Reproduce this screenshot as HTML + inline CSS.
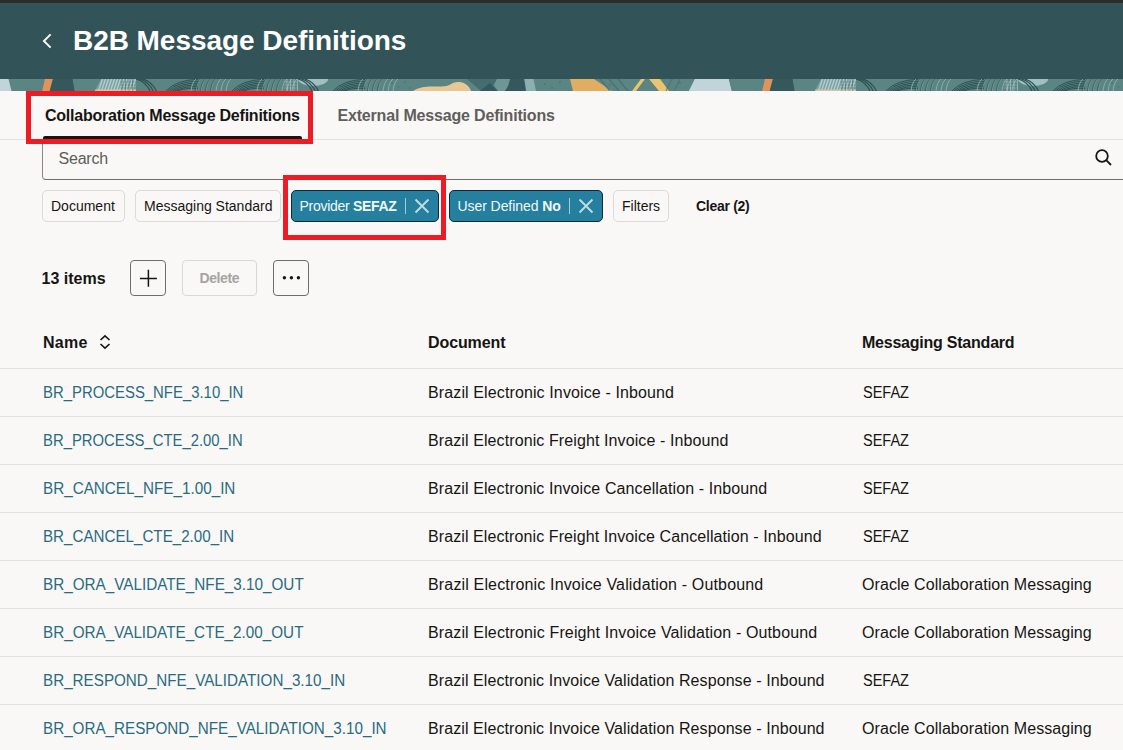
<!DOCTYPE html>
<html><head><meta charset="utf-8">
<style>
*{margin:0;padding:0;box-sizing:border-box}
html,body{width:1123px;height:750px;overflow:hidden;background:#f9f8f6;font-family:"Liberation Sans",sans-serif;color:#161513}
.a{position:absolute;white-space:nowrap}
#topbar{position:absolute;left:0;top:0;width:1123px;height:3px;background:#2f2b2b}
#hdr{position:absolute;left:0;top:3px;width:1123px;height:76px;background:#325358}
#strip{position:absolute;left:0;top:79px;width:1123px;height:12px;overflow:hidden;background:#5b8682}
.t{line-height:1}
.title{font-size:28px;font-weight:bold;color:#fff}
.tab{font-size:16px;font-weight:bold}
.line{position:absolute;left:0;width:1123px;height:1px;background:#e3e1dd}
.chip{position:absolute;top:190px;height:32px;border:1px solid #dcdad5;border-radius:5px;background:#f9f8f6}
.chip.sel{background:#257f9e;border-color:#0f2a35}
.ctext{font-size:14px}
.red{position:absolute;border:5px solid #ed1c24}
.btn{position:absolute;top:260px;height:36px;border:1px solid #6f6d6a;border-radius:4px}
.cell{font-size:16px}
.link{color:#2a6b80}
</style></head><body>
<div id="topbar"></div>
<div id="hdr"></div>
<div id="strip"><svg width="1123" height="12" viewBox="0 0 1123 12" style="position:absolute;left:0;top:0"><rect width="1123" height="12" fill="#5a8582"/><g><polygon points="-25,0 8.5,0 11.5,12 -31,12" fill="#c1d4d9" opacity="1"/>
<polygon points="695,0 728.5,0 731.5,12 689,12" fill="#c1d4d9" opacity="1"/>
<polygon points="44.9,0 52.9,0 49.7,12 42.2,12" fill="#e2935a" opacity="1"/>
<polygon points="52.9,0 72.6,0 74.6,12 49.7,12" fill="#34585c" opacity="1"/>
<polygon points="101,0 136,0 136,12 95,12" fill="#7fa3a3" opacity="1"/>
<path d="M102.5 0 L98.5 12" stroke="#b8d0d2" stroke-width="1.2" fill="none" opacity="1"/>
<path d="M105.5 0 L101.5 12" stroke="#b8d0d2" stroke-width="1.2" fill="none" opacity="1"/>
<path d="M108.5 0 L104.5 12" stroke="#b8d0d2" stroke-width="1.2" fill="none" opacity="1"/>
<path d="M111.5 0 L107.5 12" stroke="#b8d0d2" stroke-width="1.2" fill="none" opacity="1"/>
<path d="M114.5 0 L110.5 12" stroke="#b8d0d2" stroke-width="1.2" fill="none" opacity="1"/>
<path d="M117.5 0 L113.5 12" stroke="#b8d0d2" stroke-width="1.2" fill="none" opacity="1"/>
<path d="M120.5 0 L116.5 12" stroke="#b8d0d2" stroke-width="1.2" fill="none" opacity="1"/>
<path d="M123.5 0 L119.5 12" stroke="#b8d0d2" stroke-width="1.2" fill="none" opacity="1"/>
<path d="M126.5 0 L122.5 12" stroke="#b8d0d2" stroke-width="1.2" fill="none" opacity="1"/>
<path d="M129.5 0 L125.5 12" stroke="#b8d0d2" stroke-width="1.2" fill="none" opacity="1"/>
<path d="M132.5 0 L128.5 12" stroke="#b8d0d2" stroke-width="1.2" fill="none" opacity="1"/>
<path d="M135.5 0 L131.5 12" stroke="#b8d0d2" stroke-width="1.2" fill="none" opacity="1"/>
<polygon points="95,10.5 136,10.5 136,12 95,12" fill="#dccba0" opacity="0.8"/>
<path d="M122 0 V12" stroke="#2f5356" stroke-width="0.8" fill="none" opacity="0.5"/>
<path d="M125.5 0 V12" stroke="#2f5356" stroke-width="0.8" fill="none" opacity="0.5"/>
<path d="M129 0 V12" stroke="#2f5356" stroke-width="0.8" fill="none" opacity="0.5"/>
<path d="M132.5 0 V12" stroke="#2f5356" stroke-width="0.8" fill="none" opacity="0.5"/>
<path d="M120 3 H136" stroke="#2f5356" stroke-width="0.7" fill="none" opacity="0.35"/>
<path d="M120 6 H136" stroke="#2f5356" stroke-width="0.7" fill="none" opacity="0.35"/>
<path d="M120 9 H136" stroke="#2f5356" stroke-width="0.7" fill="none" opacity="0.35"/>
<path d="M136 0 Q145 2 150 12" stroke="#2a4d50" stroke-width="1.1" fill="none" opacity="1"/>
<path d="M139.2 0 Q148.2 2 153.2 12" stroke="#2a4d50" stroke-width="1.1" fill="none" opacity="1"/>
<path d="M142.4 0 Q151.4 2 156.4 12" stroke="#2a4d50" stroke-width="1.1" fill="none" opacity="1"/>
<path d="M166 12 Q176 1 198 0.3" stroke="#2a4d50" stroke-width="1" fill="none" opacity="0.95"/>
<path d="M168.2 12 Q178.6 2.4 198 2.2" stroke="#2a4d50" stroke-width="1" fill="none" opacity="0.95"/>
<path d="M170.4 12 Q181.2 3.8 198 4.1" stroke="#2a4d50" stroke-width="1" fill="none" opacity="0.95"/>
<path d="M172.6 12 Q183.8 5.2 198 6" stroke="#2a4d50" stroke-width="1" fill="none" opacity="0.95"/>
<path d="M174.8 12 Q186.4 6.6 198 7.9" stroke="#2a4d50" stroke-width="1" fill="none" opacity="0.95"/>
<path d="M177 12 Q189 8 198 9.8" stroke="#2a4d50" stroke-width="1" fill="none" opacity="0.95"/>
<path d="M196 0 Q192 3 191 12" stroke="#93b3b3" stroke-width="1" fill="none" opacity="0.85"/>
<path d="M201 0 Q197 3 196 12" stroke="#93b3b3" stroke-width="1" fill="none" opacity="0.85"/>
<path d="M206 0 Q202 3 201 12" stroke="#93b3b3" stroke-width="1" fill="none" opacity="0.85"/>
<path d="M211 0 Q207 3 206 12" stroke="#93b3b3" stroke-width="1" fill="none" opacity="0.85"/>
<path d="M216 0 Q212 3 211 12" stroke="#93b3b3" stroke-width="1" fill="none" opacity="0.85"/>
<path d="M221 0 Q217 3 216 12" stroke="#93b3b3" stroke-width="1" fill="none" opacity="0.85"/>
<path d="M226 0 Q222 3 221 12" stroke="#93b3b3" stroke-width="1" fill="none" opacity="0.85"/>
<path d="M231 0 Q227 3 226 12" stroke="#93b3b3" stroke-width="1" fill="none" opacity="0.85"/>
<path d="M200.5 0 Q196.5 3 195.5 12" stroke="#2a4d50" stroke-width="0.9" fill="none" opacity="0.8"/>
<path d="M205.5 0 Q201.5 3 200.5 12" stroke="#2a4d50" stroke-width="0.9" fill="none" opacity="0.8"/>
<path d="M210.5 0 Q206.5 3 205.5 12" stroke="#2a4d50" stroke-width="0.9" fill="none" opacity="0.8"/>
<path d="M215.5 0 Q211.5 3 210.5 12" stroke="#2a4d50" stroke-width="0.9" fill="none" opacity="0.8"/>
<path d="M232 12 Q242 1 264 0.3" stroke="#2a4d50" stroke-width="1" fill="none" opacity="0.95"/>
<path d="M234.2 12 Q244.6 2.4 264 2.2" stroke="#2a4d50" stroke-width="1" fill="none" opacity="0.95"/>
<path d="M236.4 12 Q247.2 3.8 264 4.1" stroke="#2a4d50" stroke-width="1" fill="none" opacity="0.95"/>
<path d="M238.6 12 Q249.8 5.2 264 6" stroke="#2a4d50" stroke-width="1" fill="none" opacity="0.95"/>
<path d="M240.8 12 Q252.4 6.6 264 7.9" stroke="#2a4d50" stroke-width="1" fill="none" opacity="0.95"/>
<path d="M243 12 Q255 8 264 9.8" stroke="#2a4d50" stroke-width="1" fill="none" opacity="0.95"/>
<path d="M262 0 Q258 3 257 12" stroke="#93b3b3" stroke-width="1" fill="none" opacity="0.85"/>
<path d="M267 0 Q263 3 262 12" stroke="#93b3b3" stroke-width="1" fill="none" opacity="0.85"/>
<path d="M272 0 Q268 3 267 12" stroke="#93b3b3" stroke-width="1" fill="none" opacity="0.85"/>
<path d="M277 0 Q273 3 272 12" stroke="#93b3b3" stroke-width="1" fill="none" opacity="0.85"/>
<path d="M282 0 Q278 3 277 12" stroke="#93b3b3" stroke-width="1" fill="none" opacity="0.85"/>
<path d="M287 0 Q283 3 282 12" stroke="#93b3b3" stroke-width="1" fill="none" opacity="0.85"/>
<path d="M292 0 Q288 3 287 12" stroke="#93b3b3" stroke-width="1" fill="none" opacity="0.85"/>
<path d="M297 0 Q293 3 292 12" stroke="#93b3b3" stroke-width="1" fill="none" opacity="0.85"/>
<path d="M266.5 0 Q262.5 3 261.5 12" stroke="#2a4d50" stroke-width="0.9" fill="none" opacity="0.8"/>
<path d="M271.5 0 Q267.5 3 266.5 12" stroke="#2a4d50" stroke-width="0.9" fill="none" opacity="0.8"/>
<path d="M276.5 0 Q272.5 3 271.5 12" stroke="#2a4d50" stroke-width="0.9" fill="none" opacity="0.8"/>
<path d="M281.5 0 Q277.5 3 276.5 12" stroke="#2a4d50" stroke-width="0.9" fill="none" opacity="0.8"/>
<path d="M287 0 V12" stroke="#c8dadc" stroke-width="0.8" fill="none" opacity="0.6"/>
<path d="M290.5 0 V12" stroke="#c8dadc" stroke-width="0.8" fill="none" opacity="0.6"/>
<path d="M294 0 V12" stroke="#c8dadc" stroke-width="0.8" fill="none" opacity="0.6"/>
<path d="M297.5 0 V12" stroke="#c8dadc" stroke-width="0.8" fill="none" opacity="0.6"/>
<path d="M284 3 H298" stroke="#c8dadc" stroke-width="0.7" fill="none" opacity="0.4"/>
<path d="M284 6 H298" stroke="#c8dadc" stroke-width="0.7" fill="none" opacity="0.4"/>
<path d="M284 9 H298" stroke="#c8dadc" stroke-width="0.7" fill="none" opacity="0.4"/>
<path d="M298 0 A15 7 0 0 0 328 0 Z" stroke="none" stroke-width="0" fill="#9fbfc1" opacity="1"/>
<path d="M298 0 Q307 2 312 12" stroke="#2a4d50" stroke-width="1.1" fill="none" opacity="1"/>
<path d="M301.2 0 Q310.2 2 315.2 12" stroke="#2a4d50" stroke-width="1.1" fill="none" opacity="1"/>
<path d="M304.4 0 Q313.4 2 318.4 12" stroke="#2a4d50" stroke-width="1.1" fill="none" opacity="1"/>
<path d="M333 12 Q343 1 365 0.3" stroke="#2a4d50" stroke-width="1" fill="none" opacity="0.95"/>
<path d="M335.2 12 Q345.6 2.4 365 2.2" stroke="#2a4d50" stroke-width="1" fill="none" opacity="0.95"/>
<path d="M337.4 12 Q348.2 3.8 365 4.1" stroke="#2a4d50" stroke-width="1" fill="none" opacity="0.95"/>
<path d="M339.6 12 Q350.8 5.2 365 6" stroke="#2a4d50" stroke-width="1" fill="none" opacity="0.95"/>
<path d="M341.8 12 Q353.4 6.6 365 7.9" stroke="#2a4d50" stroke-width="1" fill="none" opacity="0.95"/>
<path d="M344 12 Q356 8 365 9.8" stroke="#2a4d50" stroke-width="1" fill="none" opacity="0.95"/>
<path d="M363 0 Q359 3 358 12" stroke="#93b3b3" stroke-width="1" fill="none" opacity="0.85"/>
<path d="M368 0 Q364 3 363 12" stroke="#93b3b3" stroke-width="1" fill="none" opacity="0.85"/>
<path d="M373 0 Q369 3 368 12" stroke="#93b3b3" stroke-width="1" fill="none" opacity="0.85"/>
<path d="M378 0 Q374 3 373 12" stroke="#93b3b3" stroke-width="1" fill="none" opacity="0.85"/>
<path d="M383 0 Q379 3 378 12" stroke="#93b3b3" stroke-width="1" fill="none" opacity="0.85"/>
<path d="M388 0 Q384 3 383 12" stroke="#93b3b3" stroke-width="1" fill="none" opacity="0.85"/>
<path d="M393 0 Q389 3 388 12" stroke="#93b3b3" stroke-width="1" fill="none" opacity="0.85"/>
<path d="M398 0 Q394 3 393 12" stroke="#93b3b3" stroke-width="1" fill="none" opacity="0.85"/>
<path d="M367.5 0 Q363.5 3 362.5 12" stroke="#2a4d50" stroke-width="0.9" fill="none" opacity="0.8"/>
<path d="M372.5 0 Q368.5 3 367.5 12" stroke="#2a4d50" stroke-width="0.9" fill="none" opacity="0.8"/>
<path d="M377.5 0 Q373.5 3 372.5 12" stroke="#2a4d50" stroke-width="0.9" fill="none" opacity="0.8"/>
<path d="M382.5 0 Q378.5 3 377.5 12" stroke="#2a4d50" stroke-width="0.9" fill="none" opacity="0.8"/>
<circle cx="392" cy="4" r="0.9" fill="#3f6a6b" opacity="0.6"/>
<circle cx="398" cy="8" r="0.9" fill="#3f6a6b" opacity="0.6"/>
<circle cx="405" cy="3" r="0.9" fill="#3f6a6b" opacity="0.6"/>
<circle cx="410" cy="9" r="0.9" fill="#3f6a6b" opacity="0.6"/>
<circle cx="545" cy="5" r="0.9" fill="#3f6a6b" opacity="0.6"/>
<circle cx="552" cy="9" r="0.9" fill="#3f6a6b" opacity="0.6"/>
<circle cx="560" cy="3" r="0.9" fill="#3f6a6b" opacity="0.6"/>
<circle cx="610" cy="6" r="0.9" fill="#3f6a6b" opacity="0.6"/>
<circle cx="680" cy="4" r="0.9" fill="#3f6a6b" opacity="0.6"/>
<path d="M413 12 C418 8 428 7 436 7.5 C446 8 450 6 453 4 C455 3 457 3 460 3 C466 4 470 8 471 12 Z" stroke="none" stroke-width="0" fill="#e8c892" opacity="1"/>
<polygon points="467,0 497,0 494,6 481,12 481,12" fill="#446d70" opacity="1"/>
<polygon points="480,12 490,4 498,12" fill="#34585c" opacity="1"/>
<path d="M497 0 L510 0 Q509 7 505 12 L498 12 L494 6 Z" stroke="none" stroke-width="0" fill="#6f9696" opacity="1"/>
<path d="M510 0 L524.3 0 L525.8 12 L505 12 Q509 7 510 0 Z" stroke="none" stroke-width="0" fill="#34585c" opacity="1"/>
<polygon points="524.3,0 533.5,0 536,12 526.3,12" fill="#8cafaf" opacity="1"/>
<polygon points="570,0 594,0 612,12 573,12" fill="#e0ad62" opacity="1"/>
<path d="M600 0 L610 12" stroke="#46706f" stroke-width="1.5" fill="none" opacity="0.8"/>
<path d="M609 0 L619 12" stroke="#46706f" stroke-width="1.5" fill="none" opacity="0.8"/>
<path d="M618 0 L628 12" stroke="#46706f" stroke-width="1.5" fill="none" opacity="0.8"/>
<polygon points="641,0 645,0 636,12 632,12" fill="#ecc36f" opacity="1"/>
<polygon points="649,0 660,0 669,12 659,12" fill="#ecc36f" opacity="1"/>
<path d="M672 0 L666 12" stroke="#46706f" stroke-width="1.2" fill="none" opacity="0.7"/>
<path d="M680 0 L674 12" stroke="#46706f" stroke-width="1.2" fill="none" opacity="0.7"/></g><g transform="translate(720 0)"><polygon points="-25,0 8.5,0 11.5,12 -31,12" fill="#c1d4d9" opacity="1"/>
<polygon points="695,0 728.5,0 731.5,12 689,12" fill="#c1d4d9" opacity="1"/>
<polygon points="44.9,0 52.9,0 49.7,12 42.2,12" fill="#e2935a" opacity="1"/>
<polygon points="52.9,0 72.6,0 74.6,12 49.7,12" fill="#34585c" opacity="1"/>
<polygon points="101,0 136,0 136,12 95,12" fill="#7fa3a3" opacity="1"/>
<path d="M102.5 0 L98.5 12" stroke="#b8d0d2" stroke-width="1.2" fill="none" opacity="1"/>
<path d="M105.5 0 L101.5 12" stroke="#b8d0d2" stroke-width="1.2" fill="none" opacity="1"/>
<path d="M108.5 0 L104.5 12" stroke="#b8d0d2" stroke-width="1.2" fill="none" opacity="1"/>
<path d="M111.5 0 L107.5 12" stroke="#b8d0d2" stroke-width="1.2" fill="none" opacity="1"/>
<path d="M114.5 0 L110.5 12" stroke="#b8d0d2" stroke-width="1.2" fill="none" opacity="1"/>
<path d="M117.5 0 L113.5 12" stroke="#b8d0d2" stroke-width="1.2" fill="none" opacity="1"/>
<path d="M120.5 0 L116.5 12" stroke="#b8d0d2" stroke-width="1.2" fill="none" opacity="1"/>
<path d="M123.5 0 L119.5 12" stroke="#b8d0d2" stroke-width="1.2" fill="none" opacity="1"/>
<path d="M126.5 0 L122.5 12" stroke="#b8d0d2" stroke-width="1.2" fill="none" opacity="1"/>
<path d="M129.5 0 L125.5 12" stroke="#b8d0d2" stroke-width="1.2" fill="none" opacity="1"/>
<path d="M132.5 0 L128.5 12" stroke="#b8d0d2" stroke-width="1.2" fill="none" opacity="1"/>
<path d="M135.5 0 L131.5 12" stroke="#b8d0d2" stroke-width="1.2" fill="none" opacity="1"/>
<polygon points="95,10.5 136,10.5 136,12 95,12" fill="#dccba0" opacity="0.8"/>
<path d="M122 0 V12" stroke="#2f5356" stroke-width="0.8" fill="none" opacity="0.5"/>
<path d="M125.5 0 V12" stroke="#2f5356" stroke-width="0.8" fill="none" opacity="0.5"/>
<path d="M129 0 V12" stroke="#2f5356" stroke-width="0.8" fill="none" opacity="0.5"/>
<path d="M132.5 0 V12" stroke="#2f5356" stroke-width="0.8" fill="none" opacity="0.5"/>
<path d="M120 3 H136" stroke="#2f5356" stroke-width="0.7" fill="none" opacity="0.35"/>
<path d="M120 6 H136" stroke="#2f5356" stroke-width="0.7" fill="none" opacity="0.35"/>
<path d="M120 9 H136" stroke="#2f5356" stroke-width="0.7" fill="none" opacity="0.35"/>
<path d="M136 0 Q145 2 150 12" stroke="#2a4d50" stroke-width="1.1" fill="none" opacity="1"/>
<path d="M139.2 0 Q148.2 2 153.2 12" stroke="#2a4d50" stroke-width="1.1" fill="none" opacity="1"/>
<path d="M142.4 0 Q151.4 2 156.4 12" stroke="#2a4d50" stroke-width="1.1" fill="none" opacity="1"/>
<path d="M166 12 Q176 1 198 0.3" stroke="#2a4d50" stroke-width="1" fill="none" opacity="0.95"/>
<path d="M168.2 12 Q178.6 2.4 198 2.2" stroke="#2a4d50" stroke-width="1" fill="none" opacity="0.95"/>
<path d="M170.4 12 Q181.2 3.8 198 4.1" stroke="#2a4d50" stroke-width="1" fill="none" opacity="0.95"/>
<path d="M172.6 12 Q183.8 5.2 198 6" stroke="#2a4d50" stroke-width="1" fill="none" opacity="0.95"/>
<path d="M174.8 12 Q186.4 6.6 198 7.9" stroke="#2a4d50" stroke-width="1" fill="none" opacity="0.95"/>
<path d="M177 12 Q189 8 198 9.8" stroke="#2a4d50" stroke-width="1" fill="none" opacity="0.95"/>
<path d="M196 0 Q192 3 191 12" stroke="#93b3b3" stroke-width="1" fill="none" opacity="0.85"/>
<path d="M201 0 Q197 3 196 12" stroke="#93b3b3" stroke-width="1" fill="none" opacity="0.85"/>
<path d="M206 0 Q202 3 201 12" stroke="#93b3b3" stroke-width="1" fill="none" opacity="0.85"/>
<path d="M211 0 Q207 3 206 12" stroke="#93b3b3" stroke-width="1" fill="none" opacity="0.85"/>
<path d="M216 0 Q212 3 211 12" stroke="#93b3b3" stroke-width="1" fill="none" opacity="0.85"/>
<path d="M221 0 Q217 3 216 12" stroke="#93b3b3" stroke-width="1" fill="none" opacity="0.85"/>
<path d="M226 0 Q222 3 221 12" stroke="#93b3b3" stroke-width="1" fill="none" opacity="0.85"/>
<path d="M231 0 Q227 3 226 12" stroke="#93b3b3" stroke-width="1" fill="none" opacity="0.85"/>
<path d="M200.5 0 Q196.5 3 195.5 12" stroke="#2a4d50" stroke-width="0.9" fill="none" opacity="0.8"/>
<path d="M205.5 0 Q201.5 3 200.5 12" stroke="#2a4d50" stroke-width="0.9" fill="none" opacity="0.8"/>
<path d="M210.5 0 Q206.5 3 205.5 12" stroke="#2a4d50" stroke-width="0.9" fill="none" opacity="0.8"/>
<path d="M215.5 0 Q211.5 3 210.5 12" stroke="#2a4d50" stroke-width="0.9" fill="none" opacity="0.8"/>
<path d="M232 12 Q242 1 264 0.3" stroke="#2a4d50" stroke-width="1" fill="none" opacity="0.95"/>
<path d="M234.2 12 Q244.6 2.4 264 2.2" stroke="#2a4d50" stroke-width="1" fill="none" opacity="0.95"/>
<path d="M236.4 12 Q247.2 3.8 264 4.1" stroke="#2a4d50" stroke-width="1" fill="none" opacity="0.95"/>
<path d="M238.6 12 Q249.8 5.2 264 6" stroke="#2a4d50" stroke-width="1" fill="none" opacity="0.95"/>
<path d="M240.8 12 Q252.4 6.6 264 7.9" stroke="#2a4d50" stroke-width="1" fill="none" opacity="0.95"/>
<path d="M243 12 Q255 8 264 9.8" stroke="#2a4d50" stroke-width="1" fill="none" opacity="0.95"/>
<path d="M262 0 Q258 3 257 12" stroke="#93b3b3" stroke-width="1" fill="none" opacity="0.85"/>
<path d="M267 0 Q263 3 262 12" stroke="#93b3b3" stroke-width="1" fill="none" opacity="0.85"/>
<path d="M272 0 Q268 3 267 12" stroke="#93b3b3" stroke-width="1" fill="none" opacity="0.85"/>
<path d="M277 0 Q273 3 272 12" stroke="#93b3b3" stroke-width="1" fill="none" opacity="0.85"/>
<path d="M282 0 Q278 3 277 12" stroke="#93b3b3" stroke-width="1" fill="none" opacity="0.85"/>
<path d="M287 0 Q283 3 282 12" stroke="#93b3b3" stroke-width="1" fill="none" opacity="0.85"/>
<path d="M292 0 Q288 3 287 12" stroke="#93b3b3" stroke-width="1" fill="none" opacity="0.85"/>
<path d="M297 0 Q293 3 292 12" stroke="#93b3b3" stroke-width="1" fill="none" opacity="0.85"/>
<path d="M266.5 0 Q262.5 3 261.5 12" stroke="#2a4d50" stroke-width="0.9" fill="none" opacity="0.8"/>
<path d="M271.5 0 Q267.5 3 266.5 12" stroke="#2a4d50" stroke-width="0.9" fill="none" opacity="0.8"/>
<path d="M276.5 0 Q272.5 3 271.5 12" stroke="#2a4d50" stroke-width="0.9" fill="none" opacity="0.8"/>
<path d="M281.5 0 Q277.5 3 276.5 12" stroke="#2a4d50" stroke-width="0.9" fill="none" opacity="0.8"/>
<path d="M287 0 V12" stroke="#c8dadc" stroke-width="0.8" fill="none" opacity="0.6"/>
<path d="M290.5 0 V12" stroke="#c8dadc" stroke-width="0.8" fill="none" opacity="0.6"/>
<path d="M294 0 V12" stroke="#c8dadc" stroke-width="0.8" fill="none" opacity="0.6"/>
<path d="M297.5 0 V12" stroke="#c8dadc" stroke-width="0.8" fill="none" opacity="0.6"/>
<path d="M284 3 H298" stroke="#c8dadc" stroke-width="0.7" fill="none" opacity="0.4"/>
<path d="M284 6 H298" stroke="#c8dadc" stroke-width="0.7" fill="none" opacity="0.4"/>
<path d="M284 9 H298" stroke="#c8dadc" stroke-width="0.7" fill="none" opacity="0.4"/>
<path d="M298 0 A15 7 0 0 0 328 0 Z" stroke="none" stroke-width="0" fill="#9fbfc1" opacity="1"/>
<path d="M298 0 Q307 2 312 12" stroke="#2a4d50" stroke-width="1.1" fill="none" opacity="1"/>
<path d="M301.2 0 Q310.2 2 315.2 12" stroke="#2a4d50" stroke-width="1.1" fill="none" opacity="1"/>
<path d="M304.4 0 Q313.4 2 318.4 12" stroke="#2a4d50" stroke-width="1.1" fill="none" opacity="1"/>
<path d="M333 12 Q343 1 365 0.3" stroke="#2a4d50" stroke-width="1" fill="none" opacity="0.95"/>
<path d="M335.2 12 Q345.6 2.4 365 2.2" stroke="#2a4d50" stroke-width="1" fill="none" opacity="0.95"/>
<path d="M337.4 12 Q348.2 3.8 365 4.1" stroke="#2a4d50" stroke-width="1" fill="none" opacity="0.95"/>
<path d="M339.6 12 Q350.8 5.2 365 6" stroke="#2a4d50" stroke-width="1" fill="none" opacity="0.95"/>
<path d="M341.8 12 Q353.4 6.6 365 7.9" stroke="#2a4d50" stroke-width="1" fill="none" opacity="0.95"/>
<path d="M344 12 Q356 8 365 9.8" stroke="#2a4d50" stroke-width="1" fill="none" opacity="0.95"/>
<path d="M363 0 Q359 3 358 12" stroke="#93b3b3" stroke-width="1" fill="none" opacity="0.85"/>
<path d="M368 0 Q364 3 363 12" stroke="#93b3b3" stroke-width="1" fill="none" opacity="0.85"/>
<path d="M373 0 Q369 3 368 12" stroke="#93b3b3" stroke-width="1" fill="none" opacity="0.85"/>
<path d="M378 0 Q374 3 373 12" stroke="#93b3b3" stroke-width="1" fill="none" opacity="0.85"/>
<path d="M383 0 Q379 3 378 12" stroke="#93b3b3" stroke-width="1" fill="none" opacity="0.85"/>
<path d="M388 0 Q384 3 383 12" stroke="#93b3b3" stroke-width="1" fill="none" opacity="0.85"/>
<path d="M393 0 Q389 3 388 12" stroke="#93b3b3" stroke-width="1" fill="none" opacity="0.85"/>
<path d="M398 0 Q394 3 393 12" stroke="#93b3b3" stroke-width="1" fill="none" opacity="0.85"/>
<path d="M367.5 0 Q363.5 3 362.5 12" stroke="#2a4d50" stroke-width="0.9" fill="none" opacity="0.8"/>
<path d="M372.5 0 Q368.5 3 367.5 12" stroke="#2a4d50" stroke-width="0.9" fill="none" opacity="0.8"/>
<path d="M377.5 0 Q373.5 3 372.5 12" stroke="#2a4d50" stroke-width="0.9" fill="none" opacity="0.8"/>
<path d="M382.5 0 Q378.5 3 377.5 12" stroke="#2a4d50" stroke-width="0.9" fill="none" opacity="0.8"/>
<circle cx="392" cy="4" r="0.9" fill="#3f6a6b" opacity="0.6"/>
<circle cx="398" cy="8" r="0.9" fill="#3f6a6b" opacity="0.6"/>
<circle cx="405" cy="3" r="0.9" fill="#3f6a6b" opacity="0.6"/>
<circle cx="410" cy="9" r="0.9" fill="#3f6a6b" opacity="0.6"/>
<circle cx="545" cy="5" r="0.9" fill="#3f6a6b" opacity="0.6"/>
<circle cx="552" cy="9" r="0.9" fill="#3f6a6b" opacity="0.6"/>
<circle cx="560" cy="3" r="0.9" fill="#3f6a6b" opacity="0.6"/>
<circle cx="610" cy="6" r="0.9" fill="#3f6a6b" opacity="0.6"/>
<circle cx="680" cy="4" r="0.9" fill="#3f6a6b" opacity="0.6"/>
<path d="M413 12 C418 8 428 7 436 7.5 C446 8 450 6 453 4 C455 3 457 3 460 3 C466 4 470 8 471 12 Z" stroke="none" stroke-width="0" fill="#e8c892" opacity="1"/>
<polygon points="467,0 497,0 494,6 481,12 481,12" fill="#446d70" opacity="1"/>
<polygon points="480,12 490,4 498,12" fill="#34585c" opacity="1"/>
<path d="M497 0 L510 0 Q509 7 505 12 L498 12 L494 6 Z" stroke="none" stroke-width="0" fill="#6f9696" opacity="1"/>
<path d="M510 0 L524.3 0 L525.8 12 L505 12 Q509 7 510 0 Z" stroke="none" stroke-width="0" fill="#34585c" opacity="1"/>
<polygon points="524.3,0 533.5,0 536,12 526.3,12" fill="#8cafaf" opacity="1"/>
<polygon points="570,0 594,0 612,12 573,12" fill="#e0ad62" opacity="1"/>
<path d="M600 0 L610 12" stroke="#46706f" stroke-width="1.5" fill="none" opacity="0.8"/>
<path d="M609 0 L619 12" stroke="#46706f" stroke-width="1.5" fill="none" opacity="0.8"/>
<path d="M618 0 L628 12" stroke="#46706f" stroke-width="1.5" fill="none" opacity="0.8"/>
<polygon points="641,0 645,0 636,12 632,12" fill="#ecc36f" opacity="1"/>
<polygon points="649,0 660,0 669,12 659,12" fill="#ecc36f" opacity="1"/>
<path d="M672 0 L666 12" stroke="#46706f" stroke-width="1.2" fill="none" opacity="0.7"/>
<path d="M680 0 L674 12" stroke="#46706f" stroke-width="1.2" fill="none" opacity="0.7"/></g></svg></div>

<!-- chevron -->
<svg class="a" style="left:40px;top:32px" width="14" height="18" viewBox="0 0 14 18"><path d="M10.6 2.3 L3.9 9 L10.6 15.7" fill="none" stroke="#fff" stroke-width="1.9"/></svg>
<div class="a t title" style="left:73px;top:27px;letter-spacing:-0.05px">B2B Message Definitions</div>

<!-- tabs -->
<div class="line" style="top:139px"></div>
<div class="a t tab" style="left:45px;top:108px;letter-spacing:-0.23px">Collaboration Message Definitions</div>
<div class="a t tab" style="left:337.5px;top:108px;color:#5f5e5b;letter-spacing:-0.18px">External Message Definitions</div>
<div class="a" style="left:43px;top:136px;width:259px;height:3px;background:#1c1210;border-radius:2px 2px 0 0"></div>

<!-- search -->
<div class="a" style="left:42px;top:139px;width:1100px;height:41px;border:1px solid #8a8884;border-top-color:#e3e1dd;border-bottom-color:#6f6d69;border-radius:0 0 0 4px"></div>
<div class="a t" style="left:58.5px;top:151px;font-size:16px;color:#5d5c59;letter-spacing:-0.2px">Search</div>
<svg class="a" style="left:1093px;top:147px" width="20" height="20" viewBox="0 0 20 20"><circle cx="9" cy="9" r="5.8" fill="none" stroke="#161513" stroke-width="1.8"/><path d="M13.2 13.2 L18 18" stroke="#161513" stroke-width="1.8"/></svg>

<!-- chips -->
<div class="chip" style="left:42px;width:83px"></div>
<div class="a t ctext" style="left:51px;top:199px">Document</div>
<div class="chip" style="left:135px;width:146px"></div>
<div class="a t ctext" style="left:144px;top:199px">Messaging Standard</div>
<div class="chip sel" style="left:291px;width:148px"></div>
<div class="a t ctext" style="left:299.5px;top:199px;color:#f1f8fb;letter-spacing:-0.29px">Provider <b>SEFAZ</b></div>
<div class="a" style="left:405px;top:198px;width:1px;height:16px;background:#a9cbd7"></div>
<svg class="a" style="left:414px;top:198px" width="16" height="16" viewBox="0 0 16 16"><path d="M1.5 1.5 L14.5 14.5 M14.5 1.5 L1.5 14.5" stroke="#c3dbe3" stroke-width="1.9"/></svg>
<div class="chip sel" style="left:449px;width:154px"></div>
<div class="a t ctext" style="left:457.5px;top:199px;color:#f1f8fb;letter-spacing:-0.07px">User Defined <b>No</b></div>
<div class="a" style="left:569px;top:198px;width:1px;height:16px;background:#a9cbd7"></div>
<svg class="a" style="left:578px;top:198px" width="16" height="16" viewBox="0 0 16 16"><path d="M1.5 1.5 L14.5 14.5 M14.5 1.5 L1.5 14.5" stroke="#c3dbe3" stroke-width="1.9"/></svg>
<div class="chip" style="left:613px;width:56px"></div>
<div class="a t ctext" style="left:622px;top:199px">Filters</div>
<div class="a t ctext" style="left:696px;top:199px;font-weight:bold;letter-spacing:-0.29px">Clear (2)</div>

<!-- toolbar -->
<div class="a t" style="left:41.5px;top:271px;font-size:16px;font-weight:bold">13 items</div>
<div class="btn" style="left:130px;width:36px"></div>
<svg class="a" style="left:138px;top:268px" width="20" height="20" viewBox="0 0 20 20"><path d="M10.4 1.8 V18.8 M1.9 10.4 H18.9" stroke="#161513" stroke-width="1.5"/></svg>
<div class="btn" style="left:182px;width:75px;border-color:#dad8d4"></div>
<div class="a t ctext" style="left:199.5px;top:271px;color:#a6a4a0;font-weight:bold;letter-spacing:-0.4px">Delete</div>
<div class="btn" style="left:273px;width:36px"></div>
<svg class="a" style="left:281px;top:268px" width="20" height="20" viewBox="0 0 20 20"><circle cx="3.4" cy="9.8" r="1.7" fill="#161513"/><circle cx="10.4" cy="9.8" r="1.7" fill="#161513"/><circle cx="17.4" cy="9.8" r="1.7" fill="#161513"/></svg>

<!-- table header -->
<div class="a t cell" style="left:43px;top:335px;font-weight:bold;letter-spacing:0.3px">Name</div>
<svg class="a" style="left:98px;top:334px" width="14" height="16" viewBox="0 0 14 16"><path d="M2.5 6 L7 1.8 L11.5 6 M2.5 10 L7 14.2 L11.5 10" fill="none" stroke="#161513" stroke-width="1.6"/></svg>
<div class="a t cell" style="left:428px;top:335px;font-weight:bold;letter-spacing:-0.1px">Document</div>
<div class="a t cell" style="left:862px;top:335px;font-weight:bold;letter-spacing:-0.23px">Messaging Standard</div>
<div class="line" style="top:368px"></div>
<div class="line" style="top:416px"></div>
<div class="line" style="top:464px"></div>
<div class="line" style="top:512px"></div>
<div class="line" style="top:560px"></div>
<div class="line" style="top:608px"></div>
<div class="line" style="top:656px"></div>
<div class="line" style="top:704px"></div>

<div class="a t cell link" style="left:42.5px;top:385px;transform:scaleX(0.931);transform-origin:0 0">BR_PROCESS_NFE_3.10_IN</div>
<div class="a t cell" style="left:428px;top:385px;letter-spacing:0.12px">Brazil Electronic Invoice - Inbound</div>
<div class="a t cell" style="left:862.8px;top:385px;transform:scaleX(0.906);transform-origin:0 0">SEFAZ</div>
<div class="a t cell link" style="left:42.5px;top:433px;transform:scaleX(0.928);transform-origin:0 0">BR_PROCESS_CTE_2.00_IN</div>
<div class="a t cell" style="left:428px;top:433px;letter-spacing:0.1px">Brazil Electronic Freight Invoice - Inbound</div>
<div class="a t cell" style="left:862.8px;top:433px;transform:scaleX(0.906);transform-origin:0 0">SEFAZ</div>
<div class="a t cell link" style="left:42.5px;top:481px;transform:scaleX(0.953);transform-origin:0 0">BR_CANCEL_NFE_1.00_IN</div>
<div class="a t cell" style="left:428px;top:481px;letter-spacing:0.1px">Brazil Electronic Invoice Cancellation - Inbound</div>
<div class="a t cell" style="left:862.8px;top:481px;transform:scaleX(0.906);transform-origin:0 0">SEFAZ</div>
<div class="a t cell link" style="left:42.5px;top:529px;transform:scaleX(0.9475);transform-origin:0 0">BR_CANCEL_CTE_2.00_IN</div>
<div class="a t cell" style="left:428px;top:529px;letter-spacing:0.09px">Brazil Electronic Freight Invoice Cancellation - Inbound</div>
<div class="a t cell" style="left:862.8px;top:529px;transform:scaleX(0.906);transform-origin:0 0">SEFAZ</div>
<div class="a t cell link" style="left:42.5px;top:577px;transform:scaleX(0.954);transform-origin:0 0">BR_ORA_VALIDATE_NFE_3.10_OUT</div>
<div class="a t cell" style="left:428px;top:577px;letter-spacing:0.16px">Brazil Electronic Invoice Validation - Outbound</div>
<div class="a t cell" style="left:862px;top:577px;letter-spacing:0.07px">Oracle Collaboration Messaging</div>
<div class="a t cell link" style="left:42.5px;top:625px;transform:scaleX(0.953);transform-origin:0 0">BR_ORA_VALIDATE_CTE_2.00_OUT</div>
<div class="a t cell" style="left:428px;top:625px;letter-spacing:0.13px">Brazil Electronic Freight Invoice Validation - Outbound</div>
<div class="a t cell" style="left:862px;top:625px;letter-spacing:0.07px">Oracle Collaboration Messaging</div>
<div class="a t cell link" style="left:42.5px;top:673px;transform:scaleX(0.951);transform-origin:0 0">BR_RESPOND_NFE_VALIDATION_3.10_IN</div>
<div class="a t cell" style="left:428px;top:673px;letter-spacing:0.085px">Brazil Electronic Invoice Validation Response - Inbound</div>
<div class="a t cell" style="left:862.8px;top:673px;transform:scaleX(0.906);transform-origin:0 0">SEFAZ</div>
<div class="a t cell link" style="left:42.5px;top:721px;transform:scaleX(0.951);transform-origin:0 0">BR_ORA_RESPOND_NFE_VALIDATION_3.10_IN</div>
<div class="a t cell" style="left:428px;top:721px;letter-spacing:0.085px">Brazil Electronic Invoice Validation Response - Inbound</div>
<div class="a t cell" style="left:862px;top:721px;letter-spacing:0.07px">Oracle Collaboration Messaging</div>

<!-- red annotation boxes -->
<div class="red" style="left:26px;top:91px;width:287px;height:53px"></div>
<div class="red" style="left:283px;top:175px;width:163px;height:65px"></div>
</body></html>
